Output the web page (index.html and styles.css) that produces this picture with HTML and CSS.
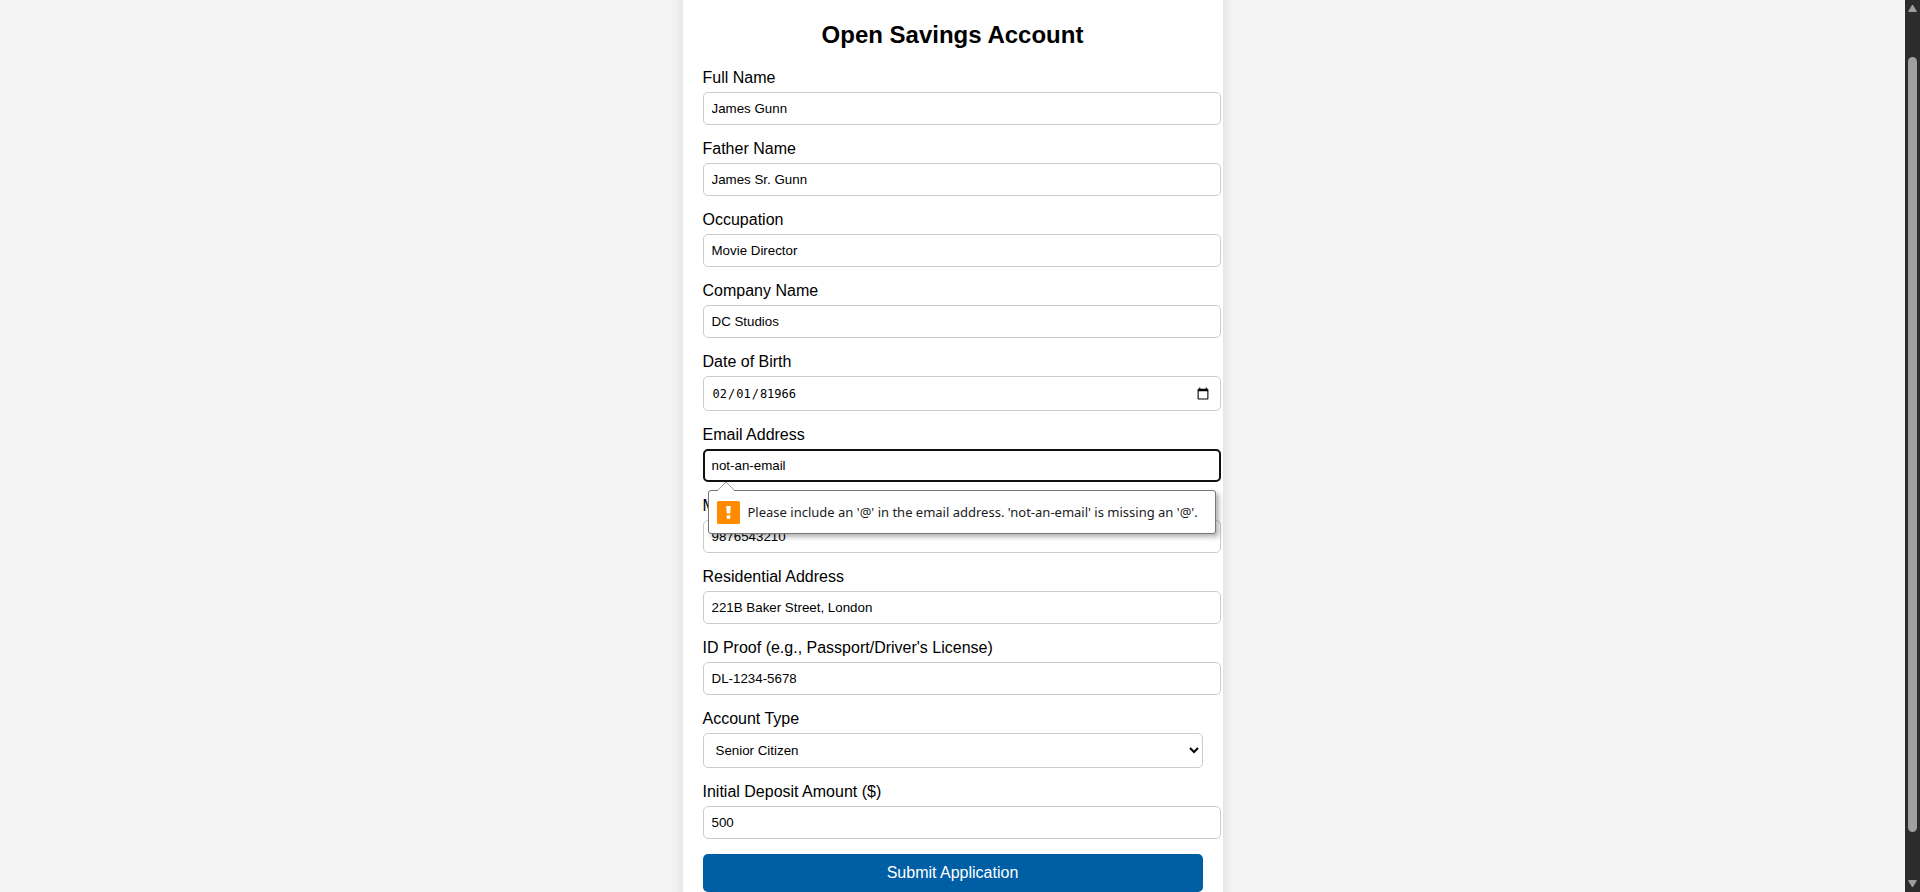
FILE: index.html
```
<!DOCTYPE html>
<html lang="en-US">
<head>
<meta charset="utf-8">
<title>Open Savings Account</title>
<link rel="stylesheet" href="styles.css">
</head>
<body>
<div class="window">
  <main class="page">
    <form class="card" novalidate>
      <h2 class="title">Open Savings Account</h2>
      <div class="field">
        <label for="name">Full Name</label>
        <input id="name" type="text" value="James Gunn">
      </div>
      <div class="field">
        <label for="father">Father Name</label>
        <input id="father" type="text" value="James Sr. Gunn">
      </div>
      <div class="field">
        <label for="occupation">Occupation</label>
        <input id="occupation" type="text" value="Movie Director">
      </div>
      <div class="field">
        <label for="company">Company Name</label>
        <input id="company" type="text" value="DC Studios">
      </div>
      <div class="field">
        <label for="dob">Date of Birth</label>
        <input id="dob" class="date" type="date" value="81966-02-01">
      </div>
      <div class="field">
        <label for="email">Email Address</label>
        <input id="email" class="focused" type="email" value="not-an-email" aria-describedby="email-error">
        <div class="bubble" id="email-error" role="alert">
          <svg class="bubble-arrow" width="18" height="10" viewBox="0 0 18 10" aria-hidden="true">
            <path d="M1 9 L9 1 L17 9 V10 H1 Z" fill="#fff"/>
            <path d="M1 9 L9 1 L17 9" fill="none" stroke="#a0a0a0"/>
          </svg>
          <svg class="bubble-icon" width="23" height="23" viewBox="0 0 23 23" aria-hidden="true">
            <rect width="23" height="23" rx="1.5" fill="#ff8c00"/>
            <path d="M9.2 5h4.6l-.6 7.6h-3.4z" fill="#fff"/>
            <rect x="9.7" y="14.2" width="3.6" height="3.6" rx=".6" fill="#fff"/>
          </svg>
          <span>Please include an '@' in the email address. 'not-an-email' is missing an '@'.</span>
        </div>
      </div>
      <div class="field">
        <label for="mobile">Mobile</label>
        <input id="mobile" type="tel" value="9876543210">
      </div>
      <div class="field">
        <label for="address">Residential Address</label>
        <input id="address" type="text" value="221B Baker Street, London">
      </div>
      <div class="field">
        <label for="idproof">ID Proof (e.g., Passport/Driver's License)</label>
        <input id="idproof" type="text" value="DL-1234-5678">
      </div>
      <div class="field">
        <label for="type">Account Type</label>
        <select id="type"><option>Senior Citizen</option></select>
      </div>
      <div class="field">
        <label for="deposit">Initial Deposit Amount ($)</label>
        <input id="deposit" type="number" value="500">
      </div>
      <button class="submit" type="submit">Submit Application</button>
    </form>
  </main>
  <div class="scrollbar" aria-hidden="true">
    <svg width="9" height="8" viewBox="0 0 9 8"><path d="M4.5 1 L8.4 7.4 H.6 Z" fill="#9f9f9f" stroke="#9f9f9f" stroke-linejoin="round"/></svg>
    <div class="track"><div class="thumb"></div></div>
    <svg width="9" height="8" viewBox="0 0 9 8"><path d="M4.5 7 L8.4 .6 H.6 Z" fill="#9f9f9f" stroke="#9f9f9f" stroke-linejoin="round"/></svg>
  </div>
</div>
</body>
</html>
```
FILE: styles.css
```
body {
  margin: 0;
  background: #f4f4f4;
  color: #000;
  font-family: "Liberation Sans", Arial, sans-serif;
  font-size: 16px;
}

.window {
  display: flex;
  height: 100vh;
  overflow: hidden;
}

.page {
  flex: 1;
  overflow: hidden;
}

.card {
  max-width: 500px;
  margin: -20px auto 0;
  padding: 41px 20px 40px;
  background: #fff;
  box-shadow: 0 0 12px rgba(0, 0, 0, 0.12);
}

.title {
  margin: 0 0 21px;
  font-size: 24px;
  line-height: 27px;
  text-align: center;
}

.field {
  position: relative;
  margin-bottom: 15px;
}

.field label {
  display: block;
  margin-bottom: 5px;
  line-height: 18px;
}

.field input,
.field select {
  display: block;
  width: 100%;
  border: 1px solid #ccc;
  border-radius: 5px;
  background: #fff;
  color: #000;
  font-family: inherit;
}

.field input {
  box-sizing: content-box;
  height: 15px;
  padding: 8px;
}

.field input[type="number"] {
  appearance: textfield;
}

.field input.date {
  height: 17px;
  font-family: "DejaVu Sans Mono", monospace;
  font-size: 12px;
}

.date::-webkit-calendar-picker-indicator {
  width: 14px;
  height: 14px;
}

.field select {
  box-sizing: border-box;
  height: 35px;
  padding: 8px;
}

.field input.focused {
  outline: 2px solid #101010;
  outline-offset: -2px;
}

.bubble {
  position: absolute;
  top: 64px;
  right: -13px;
  left: 5px;
  z-index: 1;
  display: flex;
  align-items: center;
  gap: 8px;
  box-sizing: border-box;
  height: 44px;
  padding: 0 8px;
  border: 1px solid #767676;
  border-radius: 3px;
  background: #fff;
  box-shadow: 3px 3px 5px rgba(0, 0, 0, 0.3);
  color: #1b1b1b;
  font-family: "Noto Sans", "Open Sans", sans-serif;
  font-size: 13px;
  white-space: nowrap;
}

.bubble-arrow {
  position: absolute;
  top: -10px;
  left: 8px;
}

.submit {
  display: block;
  width: 100%;
  padding: 10px;
  border: 0;
  border-radius: 5px;
  background: #005ea5;
  color: #fff;
  font-family: inherit;
  font-size: 16px;
  line-height: 18px;
}

.scrollbar {
  display: flex;
  flex-direction: column;
  align-items: center;
  gap: 4px;
  box-sizing: border-box;
  width: 15px;
  padding: 4px 0;
  background: #2c2c2c;
}

.track {
  flex: 1;
  display: flex;
  flex-direction: column;
  justify-content: flex-end;
  padding-bottom: 44px;
}

.thumb {
  width: 9px;
  height: 95%;
  border-radius: 5px;
  background: #9f9f9f;
}
```
